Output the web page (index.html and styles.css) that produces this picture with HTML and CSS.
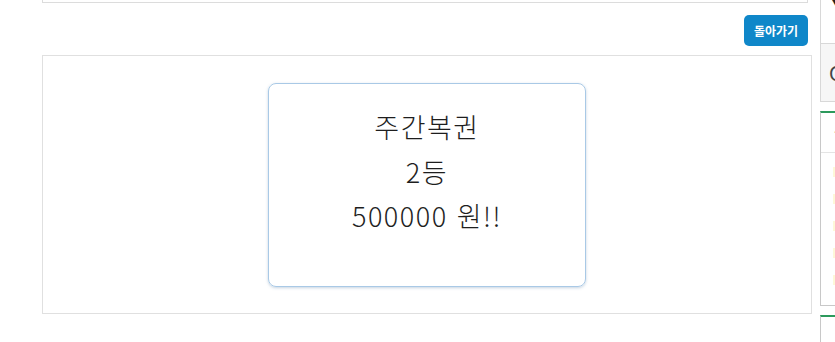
FILE: index.html
```html
<!DOCTYPE html>
<html lang="ko">
<head>
<meta charset="utf-8">
<title>주간복권</title>
<link rel="stylesheet" href="styles.css">
</head>
<body>
<div class="page">
  <main class="content">
    <div class="top-box"></div>
    <div class="actions">
      <button class="btn-back" type="button">돌아가기</button>
    </div>
    <section class="result-panel">
      <div class="result-card">
        <p class="line">주간복권</p>
        <p class="line">2등</p>
        <p class="line"><span class="num">500000</span> 원!!</p>
      </div>
    </section>
  </main>
  <aside class="sidebar">
    <div class="side-top"><span class="glyph">▼</span></div>
    <div class="side-grey"><span class="icon">C</span></div>
    <div class="side-list">
      <div class="side-head">·</div>
      <ul class="side-items">
        <li><span class="hl"></span></li>
        <li><span class="hl"></span></li>
        <li><span class="hl"></span></li>
        <li><span class="hl"></span></li>
        <li><span class="hl"></span></li>
      </ul>
    </div>
    <div class="side-list next"></div>
  </aside>
</div>
</body>
</html>
```

FILE: styles.css
```css
html, body {
  margin: 0;
  padding: 0;
  background: #fff;
  overflow: hidden;
  height: 100%;
}

.page {
  display: flex;
  align-items: flex-start;
  font-family: "Noto Sans CJK KR", "Noto Sans", sans-serif;
  color: #222;
}

.content {
  flex: 0 0 770px;
  margin-left: 42px;
}

.top-box {
  height: 2px;
  margin-right: 4px;
  border: 1px solid #dcdcdc;
  border-top: none;
}

.actions {
  display: flex;
  justify-content: flex-end;
  padding: 12px 4px 0 0;
  height: 40px;
  box-sizing: content-box;
}

.btn-back {
  height: 31px;
  width: 64px;
  padding: 0;
  border: none;
  border-radius: 5px;
  background: #0f87c9;
  color: #fff;
  font-family: "Noto Sans CJK KR", sans-serif;
  font-weight: 700;
  font-size: 12px;
  line-height: 31px;
}

.result-panel {
  border: 1px solid #e0e0e0;
  display: flex;
  justify-content: center;
  align-items: flex-start;
  padding-top: 27px;
  box-sizing: border-box;
  height: 259px;
}

.result-card {
  width: 318px;
  height: 204px;
  box-sizing: border-box;
  border: 1px solid #a9c9e6;
  border-radius: 8px;
  box-shadow: 0 1px 3px rgba(90, 130, 170, 0.35);
  padding-top: 21px;
  text-align: center;
}

.line {
  margin: 0;
  font-size: 27px;
  font-weight: 300;
  letter-spacing: 1.5px;
  line-height: 44.5px;
  color: #1e1e1e;
}

.num {
  letter-spacing: 1.5px;
}

.sidebar {
  flex: 0 0 200px;
  margin-left: 8px;
}

.side-top {
  height: 43px;
  border-left: 1px solid #d8d8d8;
  position: relative;
}

.glyph {
  position: absolute;
  left: 9px;
  top: -8px;
  font-size: 12px;
  color: #222;
}

.side-grey {
  height: 57px;
  background: #f6f6f6;
  border: 1px solid #d8d8d8;
  border-right: none;
  position: relative;
}

.icon {
  position: absolute;
  left: 8px;
  top: 18px;
  font-size: 20px;
  line-height: 22px;
  color: #444;
}

.side-list {
  margin-top: 9px;
  height: 195px;
  box-sizing: border-box;
  border-top: 2px solid #2c9a5c;
  border-left: 1px solid #c8c8c8;
  border-bottom: 1px solid #c8c8c8;
}

.side-list.next {
  height: 40px;
  border-bottom: none;
}

.side-head {
  height: 39px;
  border-bottom: 1px solid #e4e4e4;
  padding-left: 13px;
  font-size: 12px;
  line-height: 38px;
  color: #333;
}

.side-items {
  list-style: none;
  margin: 0;
  padding: 14px 0 0 12px;
  display: flex;
  flex-direction: column;
  gap: 17px;
}

.side-items li {
  height: 10px;
}

.hl {
  display: block;
  width: 40px;
  height: 10px;
  background: #fdf8d8;
}
```
